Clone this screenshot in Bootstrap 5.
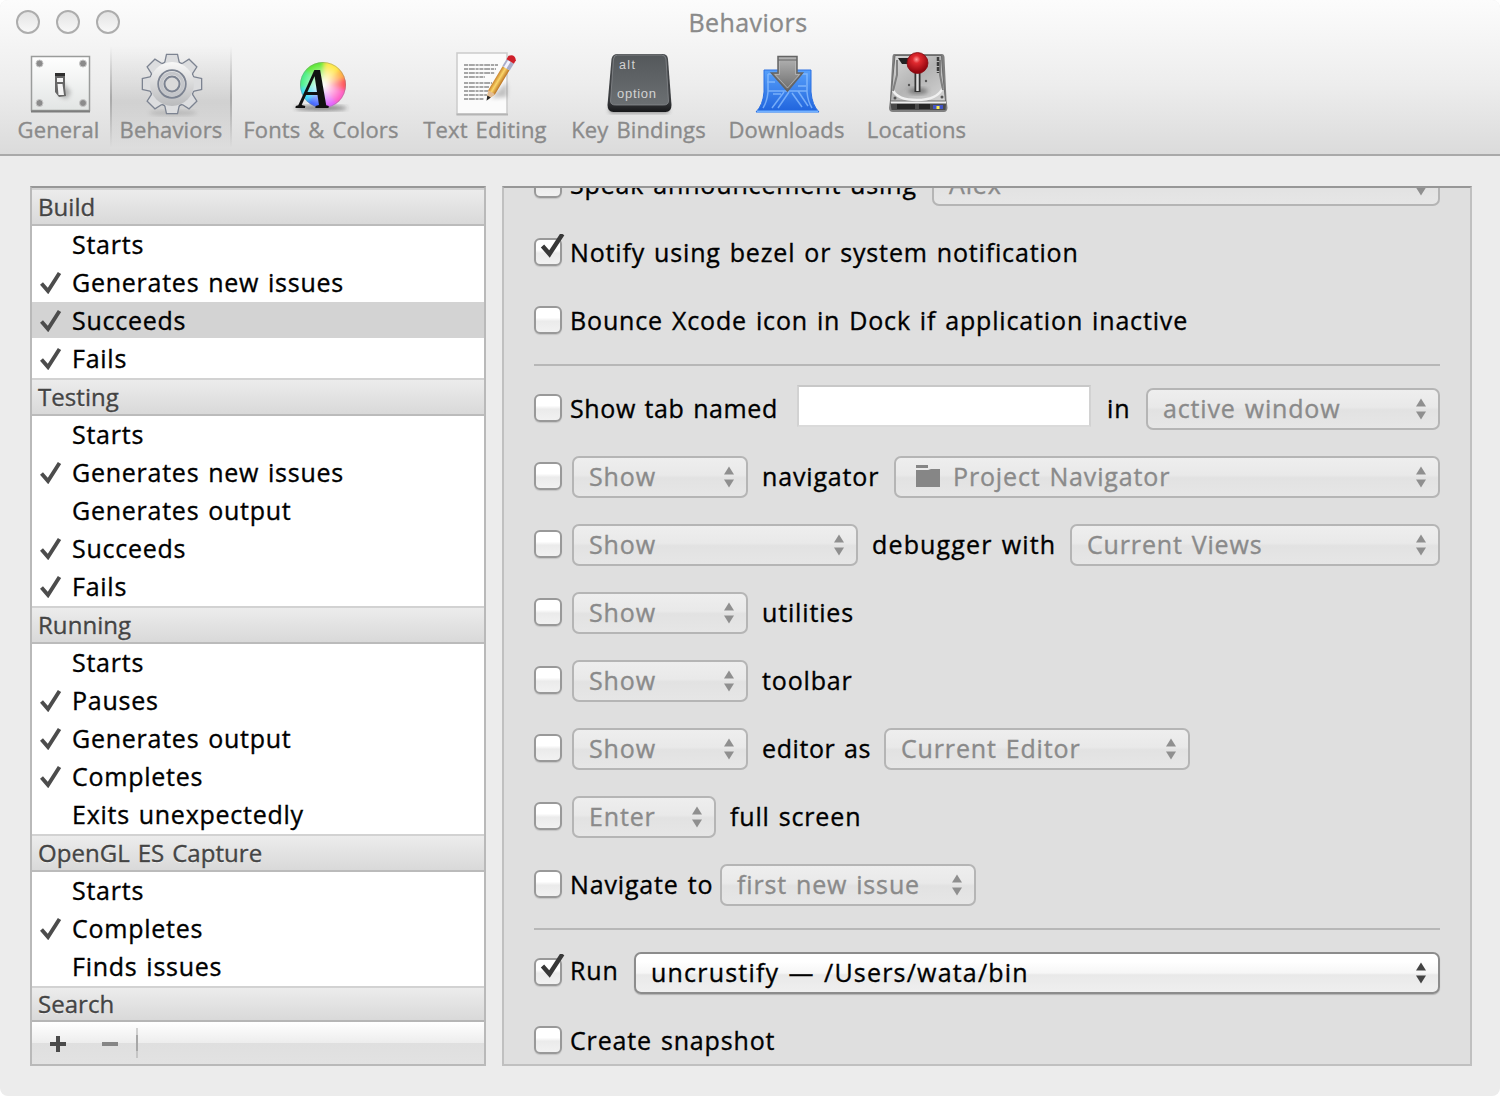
<!DOCTYPE html>
<html lang="en">
<head>
<meta charset="utf-8">
<meta name="viewport" content="width=device-width, initial-scale=1">
<title>Behaviors</title>
<link href="https://cdn.jsdelivr.net/npm/bootstrap@5.3.0/dist/css/bootstrap.min.css" rel="stylesheet">
<style>
body{margin:0;background:#fff;font-family:"Open Sans","Noto Sans",sans-serif;font-size:25px;line-height:1;color:#000;overflow:hidden;letter-spacing:.75px;word-spacing:1.6px;-webkit-text-stroke:.35px currentColor}
svg text{-webkit-text-stroke:0}
.win{width:1500px;height:1096px;background:#ececec;border-radius:8px;overflow:hidden}
.titlebar{height:156px;background:linear-gradient(#fcfcfc,#ededed 55%,#dbdbdb);border-bottom:2px solid #a9a9a9;color:#8a8a8a}
.caption-row{height:46px}
.lights{left:16px;top:10px;gap:16px}
.light{width:24px;height:24px;border-radius:50%;border:2px solid #adadad;background:linear-gradient(#e4e4e4,#f8f8f8)}
.caption{font-size:25px;letter-spacing:.4px;padding:0 4px 2px 0}
.tools{height:102px;padding-left:7px}
.tool{font-size:22px;letter-spacing:.15px;word-spacing:2px;padding-top:6px}
.tool svg{width:64px;height:64px;display:block;overflow:visible;flex:none}
.tool span{line-height:26px;white-space:nowrap}
.tool.active{background:linear-gradient(rgba(0,0,0,0),rgba(0,0,0,.1) 55%,rgba(0,0,0,0));position:relative}
.tool.active::before,.tool.active::after{content:"";position:absolute;top:0;bottom:0;width:2px;background:linear-gradient(rgba(0,0,0,0),rgba(0,0,0,.2) 50%,rgba(0,0,0,0))}
.tool.active::before{left:0}.tool.active::after{right:0}
.w1{width:103px}.w2{width:122px}.w3{width:178px}.w4{width:150px}.w5{width:157px}.w6{width:139px}.w7{width:121px}
.panes{padding:30px 28px 30px 30px;gap:16px;height:940px}
.side{width:456px;border:2px solid #b9b9b9;border-top-color:#979797;background:#fff}
.side .head{height:38px;padding:0 0 1px 6px;font-size:24px;letter-spacing:.05px;color:#444;background:linear-gradient(#ececec,#d9d9d9);border-top:2px solid #d2d2d2;border-bottom:2px solid #bbb;text-shadow:0 1px 0 rgba(255,255,255,.6)}
.side .head.last{height:34px;border-bottom:0;padding-bottom:0}
.side .item{height:38px;padding:0 0 2px 6px}
.side .item svg{width:24px;height:24px;margin-right:10px;flex:none}
.side .item.sel{background:linear-gradient(#d3d3d3,#d3d3d3) 0 0/100% 36px no-repeat}
.foot{height:44px;border-top:2px solid #b5b5b5;background:linear-gradient(#fff,#ededed 50%,#dfdfdf 50%,#e2e2e2)}
.foot svg{height:42px;width:120px;display:block}
.detail{width:970px;border:2px solid #c0c0c0;border-top-color:#979797;background:#dfdfdf;padding:0 30px;overflow:hidden;letter-spacing:.85px}
.lines{margin-top:-38px}
.line{height:68px;white-space:nowrap}
.rule{height:2px;background:#b7b7b7;margin:10px 0 8px}
.box{width:28px;height:28px;border:2px solid #999;border-radius:6px;background:linear-gradient(#fff 40%,#ebebeb 55%,#f1f1f1);position:relative;flex:none;box-shadow:0 1px 1px rgba(0,0,0,.12)}
.box svg{position:absolute;left:2px;top:-6px;width:28px;height:26px;overflow:visible}
.lab{margin-left:8px;flex:none}
.pop{height:42px;border:2px solid #b5b5b5;border-radius:7px;background:linear-gradient(#eee,#e9e9e9 45%,#e2e2e2 52%,#e6e6e6);color:#8a8a8a;padding:0 11px 2px 15px;margin-top:2px;flex:none}
.pop.on{background:linear-gradient(#fff 20%,#f6f6f6 50%,#e9e9e9 55%,#efefef);border-color:#8c8c8c;color:#000;letter-spacing:1.2px;box-shadow:0 1px 1px rgba(0,0,0,.2)}
.pop .arr{width:12px;height:24px;margin-top:2px;flex:none;fill:#8f8f8f}
.pop.on .arr{fill:#444}
.field{width:294px;height:42px;background:#fff;border:2px solid #d2d2d2;border-top-color:#c8c8c8;border-bottom-color:#dadada;margin-top:-4px}
.m10{margin-left:10px}
.l-speak{width:362px}.l-tab{width:227px;letter-spacing:.6px}.l-in{width:39px;margin-left:16px}.l-nav{width:132px;margin-left:14px}.l-deb{width:198px;margin-left:14px;letter-spacing:1.15px}.l-ed{width:122px;margin-left:14px;letter-spacing:.6px}.l-go{width:150px}.l-run{width:64px;padding-bottom:3px}
.p-176{width:176px}.p-286{width:286px}.p-144{width:144px}.p-306{width:306px}.p-256{width:256px}
</style>
<script src="https://cdn.jsdelivr.net/npm/bootstrap@5.3.0/dist/js/bootstrap.bundle.min.js"></script>
</head>
<body>
<svg width="0" height="0" class="position-absolute">
  <defs>
    <symbol id="arr" viewBox="0 0 12 24"><path d="M6 1.500 11 9.500H1zM6 22.500 1 14.500H11z"/></symbol>
    <symbol id="tick" viewBox="0 0 24 24"><path d="M3.500 13.500 10 21 21.500 3" fill="none" stroke="#4c4c4c" stroke-width="3.900"/></symbol>
    <symbol id="tickbox" viewBox="0 0 28 26"><path d="M4.500 12 11.500 20 24.500 0" fill="none" stroke="#383838" stroke-width="4.400"/></symbol>
    <linearGradient id="gPlate" x2="0" y2="1"><stop stop-color="#fff"/><stop offset="1" stop-color="#e2e5e4"/></linearGradient>
    <linearGradient id="gGear" x2="0" y2="1"><stop stop-color="#f8f8f8"/><stop offset="1" stop-color="#b9babc"/></linearGradient>
    <linearGradient id="gKey" x2="0" y2="1"><stop stop-color="#54585b"/><stop offset="1" stop-color="#6b6f72"/></linearGradient>
    <linearGradient id="gKeyB" x2="0" y2="1"><stop stop-color="#4a4d50"/><stop offset=".8" stop-color="#3a3c3f"/><stop offset="1" stop-color="#17181a"/></linearGradient>
    <linearGradient id="gBlue" x2="0" y2="1"><stop stop-color="#57a0fa"/><stop offset="1" stop-color="#1f63dd"/></linearGradient>
    <linearGradient id="gArrow" x2="0" y2="1"><stop stop-color="#b5b5b5"/><stop offset="1" stop-color="#6c6c6c"/></linearGradient>
    <linearGradient id="gDisk" x2="1" y2="1"><stop stop-color="#d9d9d9"/><stop offset=".5" stop-color="#b4b4b4"/><stop offset="1" stop-color="#d5d5d5"/></linearGradient>
    <linearGradient id="gPencil"><stop stop-color="#c9822a"/><stop offset=".45" stop-color="#fbd76c"/><stop offset="1" stop-color="#b9701f"/></linearGradient>
    <radialGradient id="gBall" cx=".45" cy=".33" r=".6"><stop stop-color="#ff9a9a"/><stop offset=".3" stop-color="#e02a2f"/><stop offset="1" stop-color="#93060f"/></radialGradient>
    <radialGradient id="gWhite"><stop stop-color="#fff"/><stop offset=".3" stop-color="#fff" stop-opacity=".75"/><stop offset="1" stop-color="#fff" stop-opacity="0"/></radialGradient>
    <filter id="soft" x="-30%" y="-30%" width="160%" height="160%"><feGaussianBlur stdDeviation="2.200"/></filter>
    <clipPath id="disc"><circle cx="34" cy="33" r="23"/></clipPath>
    <path id="tooth" d="M-8.500-19-6.500-22-5-29H5L6.500-22 8.500-19z"/>
    <g id="gearShape"><circle r="22"/><use href="#tooth"/><use href="#tooth" transform="rotate(45)"/><use href="#tooth" transform="rotate(90)"/><use href="#tooth" transform="rotate(135)"/><use href="#tooth" transform="rotate(180)"/><use href="#tooth" transform="rotate(225)"/><use href="#tooth" transform="rotate(270)"/><use href="#tooth" transform="rotate(315)"/></g>
  </defs>
</svg>
<div class="win">
  <header class="titlebar">
    <div class="caption-row position-relative d-flex align-items-center justify-content-center">
      <div class="lights position-absolute d-flex"><i class="light"></i><i class="light"></i><i class="light"></i></div>
      <div class="caption">Behaviors</div>
    </div>
    <nav class="tools d-flex">
      <div class="tool w1 d-flex flex-column align-items-center">
        <svg viewBox="0 0 64 64"><rect x="4.500" y="4.500" width="58" height="54" fill="url(#gPlate)" stroke="#9a9c9b" stroke-width="1.500"/><path d="M4 59.500H63" stroke="#7d7d7d" stroke-width="2"/><g fill="#8b8b8b" stroke="#c8c8c8"><circle cx="12.500" cy="11.500" r="3.500"/><circle cx="56" cy="11.500" r="3.500"/><circle cx="12.500" cy="51" r="3.500"/><circle cx="56" cy="51" r="3.500"/></g><path d="M34 28 44 40 40 47 32 44z" fill="#777" opacity=".5" filter="url(#soft)"/><path d="M28 21H38V36L39 44 32 45 28 40z" fill="#666"/><path d="M30 26H36V30H30zM30.500 32H35.500L37 43H31.500z" fill="#f4f4f4"/><path d="M28 21H38V24H28z" fill="#2f2f2f"/></svg>
        <span>General</span>
      </div>
      <div class="tool active w2 d-flex flex-column align-items-center">
        <svg viewBox="0 0 64 64"><ellipse cx="34" cy="61" rx="24" ry="2" fill="#777" opacity=".4" filter="url(#soft)"/><g transform="translate(33 32)"><use href="#gearShape" fill="none" stroke="#7c8391" stroke-width="2.600"/><g fill="#dcdddf"><use href="#gearShape"/></g><circle r="22" fill="url(#gGear)"/><g fill="none" stroke="#7c8391"><circle r="13.800" stroke-width="1.800"/><circle r="7.500" stroke-width="2" fill="#dadada"/></g><circle r="10.800" fill="none" stroke="#c4c6ca" stroke-width="3"/></g></svg>
        <span>Behaviors</span>
      </div>
      <div class="tool w3 d-flex flex-column align-items-center">
        <svg viewBox="0 0 64 64"><ellipse cx="32" cy="56" rx="26" ry="2.500" fill="#333" opacity=".6" filter="url(#soft)"/><g clip-path="url(#disc)"><g filter="url(#soft)"><path d="M34 33V3L70 8z" fill="#ffe94d"/><path d="M34 33 66 4 74 33z" fill="#ffb347"/><path d="M34 33 74 20V48z" fill="#ff5a5f"/><path d="M34 33 72 42 50 70z" fill="#ff63c8"/><path d="M34 33 60 70H28z" fill="#e266ff"/><path d="M34 33 36 70 0 60z" fill="#4a6bff"/><path d="M34 33 4 64 0 28z" fill="#3ddcf5"/><path d="M34 33 0 38V0z" fill="#4df08a"/><path d="M34 33 4 8 36 0z" fill="#63ea3c"/></g><circle cx="34" cy="33" r="21" fill="url(#gWhite)"/></g><circle cx="34" cy="33" r="22.500" fill="none" stroke="#777" stroke-opacity=".4"/><text x="9" y="55.500" font-family="Liberation Serif,serif" font-style="italic" font-weight="700" font-size="58" textLength="33" lengthAdjust="spacingAndGlyphs" fill="#111">A</text></svg>
        <span>Fonts &amp; Colors</span>
      </div>
      <div class="tool w4 d-flex flex-column align-items-center">
        <svg viewBox="0 0 64 64"><rect x="4" y="1" width="50" height="61" fill="#fbfbfb" stroke="#cbcbcb" stroke-width="1.500"/><path d="M3.500 62.500H55" stroke="#b5b5b5" stroke-width="2"/><g stroke="#8a8a8a" stroke-width="1.600" stroke-dasharray="4 .8 6 .8 3 .8"><path d="M11 13H45M11 17H43M11 21H42M11 25H32M11 31H39M11 35H36M11 39H35M11 43H34M11 47H31"/></g><path d="M38 46 54 30V45z" fill="#555" opacity=".35" filter="url(#soft)"/><g transform="translate(34 48) rotate(31)"><path d="M0 0-4-9V-37H4V-9z" fill="url(#gPencil)"/><path d="M0 0-4-9 4-9z" fill="#e3bd94"/><path d="M0 1-2-4H2z" fill="#222"/><rect x="-4.300" y="-45" width="8.600" height="8" fill="#a9acc8"/><path d="M-1-45V-37" stroke="#f2f2ff" stroke-width="3"/><path d="M-4.300-45V-49Q0-54 4.300-49V-45z" fill="#cf1f2a"/></g></svg>
        <span>Text Editing</span>
      </div>
      <div class="tool w5 d-flex flex-column align-items-center">
        <svg viewBox="0 0 64 64"><rect x="2" y="55" width="60" height="6" rx="3" fill="#333" opacity=".5" filter="url(#soft)"/><path d="M10 2H55Q60 2 60.500 7L64 53Q64 60 58 60H6Q0 60 0 53L4 7Q5 2 10 2z" fill="url(#gKeyB)" transform="translate(.5)"/><path d="M10 3H54Q58 3 58.500 7L61 49Q61 53 56 53H8Q3 53 3 49L6 7Q6.500 3 10 3z" fill="url(#gKey)" stroke="#85888b" stroke-width=".8" transform="translate(.5)"/><g fill="#d2d2d2" font-family="Liberation Sans,sans-serif" letter-spacing="0"><text x="12" y="17" font-size="12.500" textLength="16">alt</text><text x="10" y="46" font-size="13" textLength="39">option</text></g></svg>
        <span>Key Bindings</span>
      </div>
      <div class="tool w6 d-flex flex-column align-items-center">
        <svg viewBox="0 0 64 64"><path d="M3 61H60" stroke="#333" stroke-width="3" opacity=".5" filter="url(#soft)"/><path d="M9 18H56V40Q57 53 64 60H1Q8 53 9 40z" fill="url(#gBlue)" stroke="#2c70e2"/><path d="M2 59.500H63" stroke="#73b1ff" stroke-width="2"/><path d="M13 22H52V40Q53 50 57 56M13 22V40Q12 50 8 56M13 39H52M17 56 29 40M23 56 34 40M37 41 47 55M43 39 53 54M18 42H26M43 34H51M12 30H20" fill="none" stroke="#8fc0ff" stroke-width="1.500" opacity=".75"/><path d="M23 4.500H42V21H47.500L32.500 39 16.500 21H23z" fill="url(#gArrow)" stroke="#646464" stroke-width="1.500"/><path d="M23 8H42" stroke="#646464"/><path d="M24.500 9V22.500H20L32.500 36 44.500 22.500H40.500V9" fill="none" stroke="#bcbcbc" opacity=".7"/></svg>
        <span>Downloads</span>
      </div>
      <div class="tool w7 d-flex flex-column align-items-center">
        <svg viewBox="0 0 64 64"><path d="M6 60H62" stroke="#333" stroke-width="3" opacity=".5" filter="url(#soft)"/><path d="M9 2H57Q59 2 59.500 5L61.500 48 62.500 56Q62 60 59 60H8Q4 60 4 56L5 48 7.500 4Q8 2 9 2z" fill="#808080"/><path d="M10 3.500H56.500L58 24 60.500 49H5.500L8 24z" fill="url(#gDisk)" stroke="#6c6c6c"/><path d="M8 38Q12 48 32 48T58 36" fill="none" stroke="#f0f0f0" stroke-width="2.500"/><path d="M12 8V23L8 39M55 8V23L58 38" fill="none" stroke="#808080" stroke-width="2"/><path d="M13 6H24V12H17z" fill="#222"/><path d="M53 5V21" stroke="#3c3c3c" stroke-width="2.500" stroke-dasharray="4 1"/><path d="M5.500 51H61L60.500 58H6.500z" fill="#4b4b4b"/><path d="M6 50.500H61" stroke="#eee" stroke-width="2"/><path d="M12 54.500H30M34 54.500H45" stroke="#252525" stroke-width="5"/><path d="M48 55H58" stroke="#4254c5" stroke-width="4"/><rect x="51.500" y="54" width="3" height="3" fill="#fff04a"/><g fill="#555"><circle cx="10" cy="46" r="1.500"/><circle cx="57" cy="45" r="1.500"/><circle cx="24" cy="33" r="1.200"/><circle cx="41" cy="29" r="1.200"/></g><ellipse cx="33" cy="39" rx="10" ry="3" fill="#444" opacity=".6" filter="url(#soft)"/><path d="M32.500 18V40" stroke="#333" stroke-width="6"/><path d="M32.500 18V39" stroke="#ddd" stroke-width="2.500"/><circle cx="32.500" cy="11" r="10.500" fill="url(#gBall)" stroke="#850a12" stroke-width=".8"/></svg>
        <span>Locations</span>
      </div>
    </nav>
  </header>
  <main class="panes d-flex">
    <aside class="side d-flex flex-column">
      <div class="head d-flex align-items-center">Build</div>
      <div class="item d-flex align-items-center"><svg></svg>Starts</div>
      <div class="item d-flex align-items-center"><svg><use href="#tick"/></svg>Generates new issues</div>
      <div class="item sel d-flex align-items-center"><svg><use href="#tick"/></svg>Succeeds</div>
      <div class="item d-flex align-items-center"><svg><use href="#tick"/></svg>Fails</div>
      <div class="head d-flex align-items-center">Testing</div>
      <div class="item d-flex align-items-center"><svg></svg>Starts</div>
      <div class="item d-flex align-items-center"><svg><use href="#tick"/></svg>Generates new issues</div>
      <div class="item d-flex align-items-center"><svg></svg>Generates output</div>
      <div class="item d-flex align-items-center"><svg><use href="#tick"/></svg>Succeeds</div>
      <div class="item d-flex align-items-center"><svg><use href="#tick"/></svg>Fails</div>
      <div class="head d-flex align-items-center">Running</div>
      <div class="item d-flex align-items-center"><svg></svg>Starts</div>
      <div class="item d-flex align-items-center"><svg><use href="#tick"/></svg>Pauses</div>
      <div class="item d-flex align-items-center"><svg><use href="#tick"/></svg>Generates output</div>
      <div class="item d-flex align-items-center"><svg><use href="#tick"/></svg>Completes</div>
      <div class="item d-flex align-items-center"><svg></svg>Exits unexpectedly</div>
      <div class="head d-flex align-items-center">OpenGL ES Capture</div>
      <div class="item d-flex align-items-center"><svg></svg>Starts</div>
      <div class="item d-flex align-items-center"><svg><use href="#tick"/></svg>Completes</div>
      <div class="item d-flex align-items-center"><svg></svg>Finds issues</div>
      <div class="head last d-flex align-items-center">Search</div>
      <div class="foot"><svg viewBox="0 0 120 42"><path d="M18 22H34M26 14V30" stroke="#4a4a4a" stroke-width="4"/><path d="M70 22H86" stroke="#868686" stroke-width="4"/><path d="M104 13H106V29H104z" fill="#a5a5a5"/><path d="M104.500 6H105.500V36H104.500z" fill="#aaa"/></svg></div>
    </aside>
    <section class="detail">
      <div class="lines">
        <div class="line d-flex align-items-center"><span class="box"></span><span class="lab l-speak">Speak announcement using</span><div class="pop flex-fill d-flex align-items-center justify-content-between">Alex<svg class="arr"><use href="#arr"/></svg></div></div>
        <div class="line d-flex align-items-center"><span class="box"><svg><use href="#tickbox"/></svg></span><span class="lab">Notify using bezel or system notification</span></div>
        <div class="line d-flex align-items-center"><span class="box"></span><span class="lab">Bounce Xcode icon in Dock if application inactive</span></div>
        <div class="rule"></div>
        <div class="line d-flex align-items-center"><span class="box"></span><span class="lab l-tab">Show tab named</span><span class="field"></span><span class="l-in">in</span><div class="pop flex-fill d-flex align-items-center justify-content-between">active window<svg class="arr"><use href="#arr"/></svg></div></div>
        <div class="line d-flex align-items-center"><span class="box"></span><div class="pop p-176 m10 d-flex align-items-center justify-content-between">Show<svg class="arr"><use href="#arr"/></svg></div><span class="l-nav">navigator</span><div class="pop flex-fill d-flex align-items-center"><svg width="26" height="24" class="ms-1"><path d="M1 1H13V4H1zM1 6H13L16 5H25V23H1z" fill="#868686"/></svg><span class="flex-fill ps-2 ms-1">Project Navigator</span><svg class="arr"><use href="#arr"/></svg></div></div>
        <div class="line d-flex align-items-center"><span class="box"></span><div class="pop p-286 m10 d-flex align-items-center justify-content-between">Show<svg class="arr"><use href="#arr"/></svg></div><span class="l-deb">debugger with</span><div class="pop flex-fill d-flex align-items-center justify-content-between">Current Views<svg class="arr"><use href="#arr"/></svg></div></div>
        <div class="line d-flex align-items-center"><span class="box"></span><div class="pop p-176 m10 d-flex align-items-center justify-content-between">Show<svg class="arr"><use href="#arr"/></svg></div><span class="l-nav">utilities</span></div>
        <div class="line d-flex align-items-center"><span class="box"></span><div class="pop p-176 m10 d-flex align-items-center justify-content-between">Show<svg class="arr"><use href="#arr"/></svg></div><span class="l-nav">toolbar</span></div>
        <div class="line d-flex align-items-center"><span class="box"></span><div class="pop p-176 m10 d-flex align-items-center justify-content-between">Show<svg class="arr"><use href="#arr"/></svg></div><span class="l-ed">editor as</span><div class="pop p-306 d-flex align-items-center justify-content-between">Current Editor<svg class="arr"><use href="#arr"/></svg></div></div>
        <div class="line d-flex align-items-center"><span class="box"></span><div class="pop p-144 m10 d-flex align-items-center justify-content-between">Enter<svg class="arr"><use href="#arr"/></svg></div><span class="l-nav">full screen</span></div>
        <div class="line d-flex align-items-center"><span class="box"></span><span class="lab l-go">Navigate to</span><div class="pop p-256 d-flex align-items-center justify-content-between">first new issue<svg class="arr"><use href="#arr"/></svg></div></div>
        <div class="rule"></div>
        <div class="line d-flex align-items-center"><span class="box"><svg><use href="#tickbox"/></svg></span><span class="lab l-run">Run</span><div class="pop on flex-fill d-flex align-items-center justify-content-between">uncrustify — /Users/wata/bin<svg class="arr"><use href="#arr"/></svg></div></div>
        <div class="line d-flex align-items-center"><span class="box"></span><span class="lab">Create snapshot</span></div>
      </div>
    </section>
  </main>
</div>
</body>
</html>
